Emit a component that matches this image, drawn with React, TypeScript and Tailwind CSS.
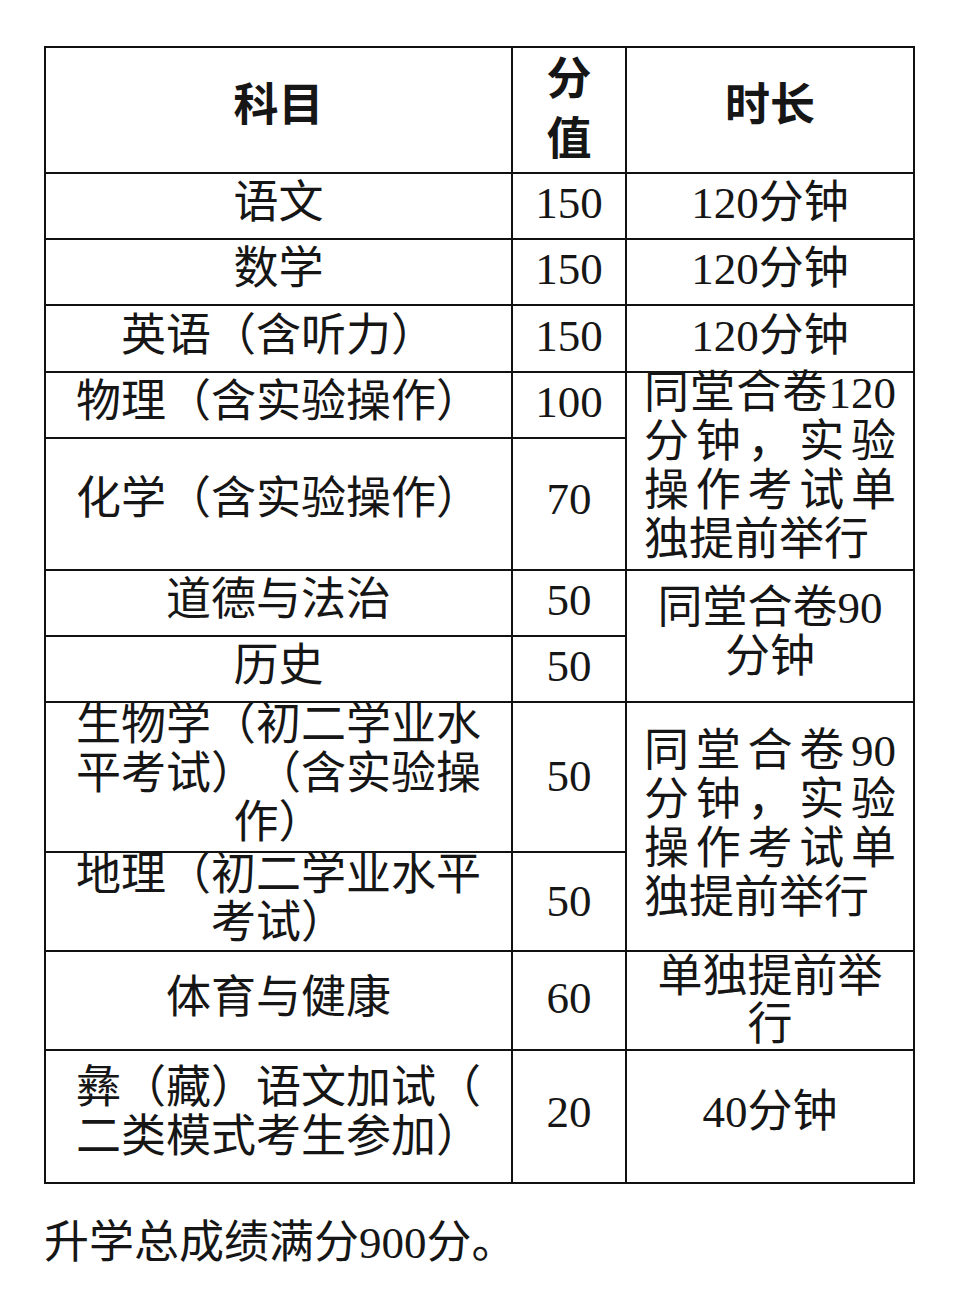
import type { ReactNode } from 'react';

function Cell({ children, className = '' }: { children: ReactNode; className?: string }) {
  return (
    <div className={`flex flex-col items-center justify-center bg-white text-center ${className}`}>
      {children}
    </div>
  );
}

// 両端揃えの行（最終行以外）
function JLine({ children }: { children: ReactNode }) {
  return <p className="text-justify [text-align-last:justify]">{children}</p>;
}

export default function App() {
  return (
    <div className="min-h-screen bg-white pl-[44px] pt-[46px] font-['Liberation_Serif','Noto_Sans_CJK_SC',sans-serif] text-[45px] text-[#161616] [text-spacing-trim:space-all]">
      <div className="grid w-fit grid-cols-[465px_112px_286px] grid-rows-[124px_64px_64px_65px_64px_130px_64px_64px_148px_97px_97px_131px] gap-[2px] border-2 border-[#111] bg-[#111]">
        {/* header */}
        <Cell className="pb-[6px] font-bold">科目</Cell>
        <Cell className="font-bold leading-[60px]">
          <p>分</p>
          <p>值</p>
        </Cell>
        <Cell className="pb-[6px] font-bold">时长</Cell>

        <Cell className="pb-[4px]">语文</Cell>
        <Cell className="pb-[4px]">150</Cell>
        <Cell className="pb-[4px]">120分钟</Cell>

        <Cell className="pb-[4px]">数学</Cell>
        <Cell className="pb-[4px]">150</Cell>
        <Cell className="pb-[4px]">120分钟</Cell>

        <Cell className="pb-[4px]">英语（含听力）</Cell>
        <Cell className="pb-[4px]">150</Cell>
        <Cell className="pb-[4px]">120分钟</Cell>

        <Cell className="pb-[4px]">物理（含实验操作）</Cell>
        <Cell className="pb-[4px]">100</Cell>
        <Cell className="row-span-2 pb-[8px]">
          <div className="w-[252px] leading-[49px]">
            <JLine>同堂合卷120</JLine>
            <JLine>分钟，实验</JLine>
            <JLine>操作考试单</JLine>
            <p className="text-left">独提前举行</p>
          </div>
        </Cell>

        <Cell className="pb-[8px]">化学（含实验操作）</Cell>
        <Cell className="pb-[8px]">70</Cell>

        <Cell className="pb-[4px]">道德与法治</Cell>
        <Cell className="pb-[4px]">50</Cell>
        <Cell className="row-span-2 pb-[6px] leading-[49px]">
          <p>同堂合卷90</p>
          <p>分钟</p>
        </Cell>

        <Cell className="pb-[4px]">历史</Cell>
        <Cell className="pb-[4px]">50</Cell>

        <Cell className="pb-[6px] leading-[49px]">
          <p>生物学（初二学业水</p>
          <p>平考试）（含实验操</p>
          <p>作）</p>
        </Cell>
        <Cell>50</Cell>
        <Cell className="row-span-2 pb-[4px]">
          <div className="w-[252px] leading-[49px]">
            <JLine>同堂合卷90</JLine>
            <JLine>分钟，实验</JLine>
            <JLine>操作考试单</JLine>
            <p className="text-left">独提前举行</p>
          </div>
        </Cell>

        <Cell className="pb-[6px] leading-[48px]">
          <p>地理（初二学业水平</p>
          <p>考试）</p>
        </Cell>
        <Cell>50</Cell>

        <Cell className="pb-[4px]">体育与健康</Cell>
        <Cell className="pb-[4px]">60</Cell>
        <Cell className="leading-[48px]">
          <p>单独提前举</p>
          <p>行</p>
        </Cell>

        <Cell className="pb-[8px] leading-[49px]">
          <p>彝（藏）语文加试（</p>
          <p>二类模式考生参加）</p>
        </Cell>
        <Cell className="pb-[8px]">20</Cell>
        <Cell className="pb-[8px]">40分钟</Cell>
      </div>

      <p className="mt-[30px] leading-[58px]">升学总成绩满分900分。</p>
    </div>
  );
}
